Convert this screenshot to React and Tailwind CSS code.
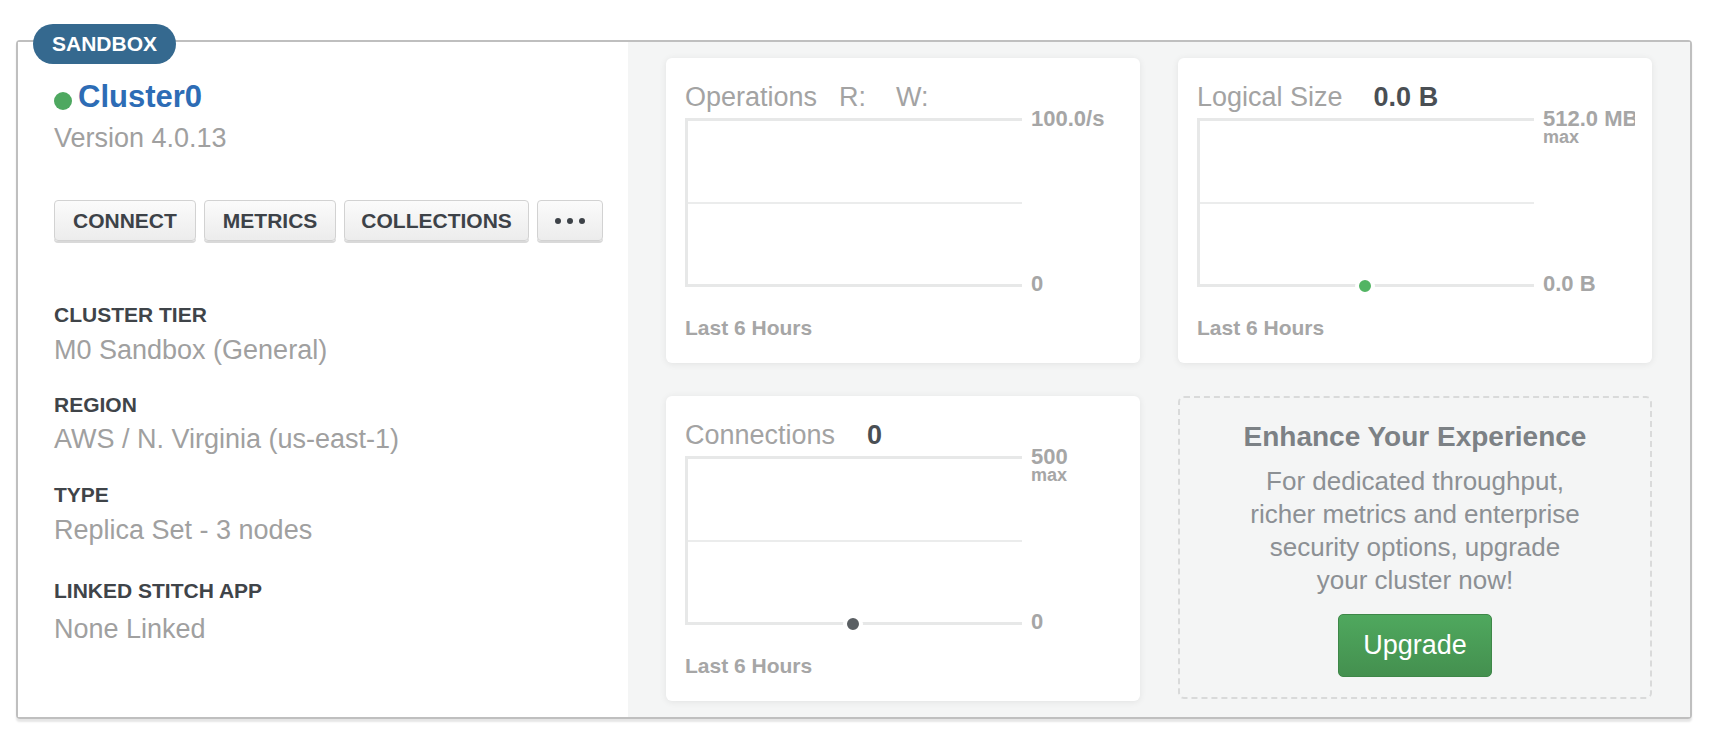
const font = { fontFamily: '"Liberation Sans", Arial, sans-serif' };

const details = [
  { label: "CLUSTER TIER", value: "M0 Sandbox (General)", gap: "mt-[61px]", vgap: "mt-[6px]" },
  { label: "REGION", value: "AWS / N. Virginia (us-east-1)", gap: "mt-[26px]", vgap: "mt-[5px]" },
  { label: "TYPE", value: "Replica Set - 3 nodes", gap: "mt-[27px]", vgap: "mt-[6px]" },
  { label: "LINKED STITCH APP", value: "None Linked", gap: "mt-[32px]", vgap: "mt-[9px]" },
];

function ActionButton({ children, className = "" }) {
  return (
    <button
      className={`h-[41px] flex items-center justify-center rounded-[4px] border border-[#d2d2d2] bg-gradient-to-b from-[#fbfbfb] to-[#ececec] shadow-[0_2px_0_#d9d9d9] text-[21px] font-bold text-[#3d4248] ${className}`}
    >
      {children}
    </button>
  );
}

function Chart({ top, sub, bottom, dot }) {
  return (
    <div className="flex items-start mt-[6px]">
      <div className="relative w-[337px] h-[169px] border-l-[3px] border-t-[3px] border-b-[3px] border-[#e7e8e8] flex flex-col justify-center">
        <div className="h-[2px] bg-[#ebecec]" />
        {dot && (
          <div
            className={`absolute left-[155px] bottom-[-11.5px] w-[20px] h-[20px] rounded-full border-4 border-white ${dot}`}
          />
        )}
      </div>
      <div className="ml-[9px] -mt-[11px] h-[189px] w-[92px] overflow-x-clip whitespace-nowrap flex flex-col justify-between text-[#a6a6a6] font-bold">
        <div>
          <div className="text-[22px] leading-[24px]">{top}</div>
          {sub && <div className="-mt-[2px] text-[18px] leading-[16px]">{sub}</div>}
        </div>
        <div className="text-[22px] leading-[24px]">{bottom}</div>
      </div>
    </div>
  );
}

function MetricCard({ title, extra, chart }) {
  return (
    <div className="h-[305px] bg-white rounded-[6px] shadow-[0_1px_7px_rgba(0,0,0,0.08)] pl-[19px] pt-[24px]">
      <div className="flex items-baseline h-[30px] text-[27px] leading-[30px] text-[#a3a3a3] whitespace-nowrap">
        <span>{title}</span>
        {extra}
      </div>
      <Chart {...chart} />
      <div className="mt-[20px] text-[21px] leading-[24px] font-bold text-[#a6a6a6]">
        Last 6 Hours
      </div>
    </div>
  );
}

export default function App() {
  return (
    <div className="min-h-screen bg-white pt-[40px] pl-[16px]" style={font}>
      <div className="relative w-[1676px] border-2 border-[#bfbfbf] rounded-[4px] shadow-[0_3px_2px_rgba(0,0,0,0.1)] flex">
        <div className="absolute left-[15px] -top-[18px] h-[40px] px-[19px] rounded-full bg-[#35698f] text-white text-[21px] font-bold flex items-center">
          SANDBOX
        </div>

        {/* Left: cluster info */}
        <div className="w-[610px] bg-white pl-[36px] pt-[37px]">
          <div className="flex items-start">
            <span className="mt-[13px] w-[18px] h-[18px] rounded-full bg-[#4ea860]" />
            <span className="ml-[6px] text-[31px] leading-[36px] font-bold text-[#2d6cb5]">Cluster0</span>
          </div>
          <div className="mt-[7px] text-[27px] leading-[32px] text-[#a0a0a0]">Version 4.0.13</div>

          <div className="mt-[46px] flex gap-[8px]">
            <ActionButton className="px-[18px]">CONNECT</ActionButton>
            <ActionButton className="px-[18px]">METRICS</ActionButton>
            <ActionButton className="px-[16px]">COLLECTIONS</ActionButton>
            <ActionButton className="px-[17px] gap-[6px]">
              <span className="w-[6px] h-[6px] rounded-full bg-[#3d4248]" />
              <span className="w-[6px] h-[6px] rounded-full bg-[#3d4248]" />
              <span className="w-[6px] h-[6px] rounded-full bg-[#3d4248]" />
            </ActionButton>
          </div>

          {details.map((d) => (
            <div key={d.label} className={d.gap}>
              <div className="text-[21px] leading-[26px] font-bold text-[#3f4449]">{d.label}</div>
              <div className={`${d.vgap} text-[27px] leading-[32px] text-[#a0a0a0]`}>{d.value}</div>
            </div>
          ))}
        </div>

        {/* Right: metrics */}
        <div className="flex-1 bg-[#f4f5f5] px-[38px] py-[16px] grid grid-cols-2 gap-x-[38px] gap-y-[33px]">
          <MetricCard
            title="Operations"
            extra={
              <>
                <span className="ml-[22px]">R:</span>
                <span className="ml-[30px]">W:</span>
              </>
            }
            chart={{ top: "100.0/s", bottom: "0" }}
          />
          <MetricCard
            title="Logical Size"
            extra={<span className="ml-[31px] font-bold text-[#4a4f54]">0.0 B</span>}
            chart={{ top: "512.0 MB", sub: "max", bottom: "0.0 B", dot: "bg-[#52b463]" }}
          />
          <MetricCard
            title="Connections"
            extra={<span className="ml-[32px] font-bold text-[#4a4f54]">0</span>}
            chart={{ top: "500", sub: "max", bottom: "0", dot: "bg-[#5a5f63]" }}
          />
          <div className="h-[303px] rounded-[6px] border-2 border-dashed border-[#d9dada] pt-[23px] flex flex-col items-center text-center">
            <div className="text-[28px] leading-[32px] font-bold text-[#7c8185]">Enhance Your Experience</div>
            <p className="mt-[12px] text-[26px] leading-[33px] text-[#8c9094]">
              For dedicated throughput,
              <br />
              richer metrics and enterprise
              <br />
              security options, upgrade
              <br />
              your cluster now!
            </p>
            <button className="mt-[17px] w-[154px] h-[63px] rounded-[5px] border border-[#3e8748] bg-gradient-to-b from-[#4fa85e] to-[#44904f] text-white text-[27px]">
              Upgrade
            </button>
          </div>
        </div>
      </div>
    </div>
  );
}
